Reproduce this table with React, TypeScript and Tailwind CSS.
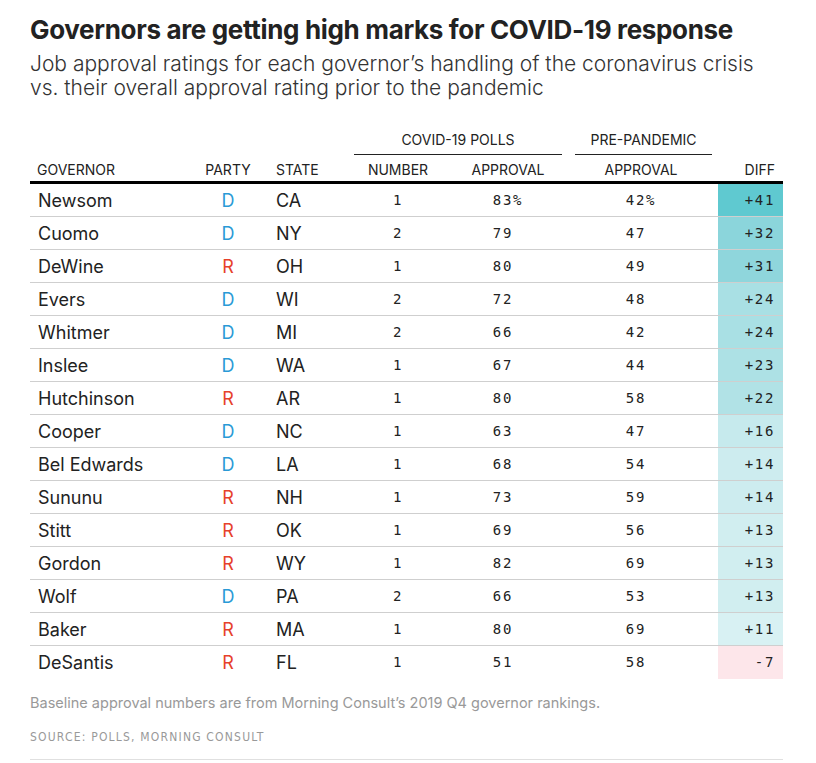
const rows = [
  { name: "Newsom", party: "D", state: "CA", num: 1, covid: "83", pre: "42", diff: "+41", bg: "bg-[#5fc9d0]", pct: true },
  { name: "Cuomo", party: "D", state: "NY", num: 2, covid: "79", pre: "47", diff: "+32", bg: "bg-[#8bd5db]" },
  { name: "DeWine", party: "R", state: "OH", num: 1, covid: "80", pre: "49", diff: "+31", bg: "bg-[#8fd6dc]" },
  { name: "Evers", party: "D", state: "WI", num: 2, covid: "72", pre: "48", diff: "+24", bg: "bg-[#a9e0e4]" },
  { name: "Whitmer", party: "D", state: "MI", num: 2, covid: "66", pre: "42", diff: "+24", bg: "bg-[#a9e0e4]" },
  { name: "Inslee", party: "D", state: "WA", num: 1, covid: "67", pre: "44", diff: "+23", bg: "bg-[#ade1e5]" },
  { name: "Hutchinson", party: "R", state: "AR", num: 1, covid: "80", pre: "58", diff: "+22", bg: "bg-[#b1e2e6]" },
  { name: "Cooper", party: "D", state: "NC", num: 1, covid: "63", pre: "47", diff: "+16", bg: "bg-[#c6eaed]" },
  { name: "Bel Edwards", party: "D", state: "LA", num: 1, covid: "68", pre: "54", diff: "+14", bg: "bg-[#cdecef]" },
  { name: "Sununu", party: "R", state: "NH", num: 1, covid: "73", pre: "59", diff: "+14", bg: "bg-[#cdecef]" },
  { name: "Stitt", party: "R", state: "OK", num: 1, covid: "69", pre: "56", diff: "+13", bg: "bg-[#d1eef0]" },
  { name: "Gordon", party: "R", state: "WY", num: 1, covid: "82", pre: "69", diff: "+13", bg: "bg-[#d1eef0]" },
  { name: "Wolf", party: "D", state: "PA", num: 2, covid: "66", pre: "53", diff: "+13", bg: "bg-[#d1eef0]" },
  { name: "Baker", party: "R", state: "MA", num: 1, covid: "80", pre: "69", diff: "+11", bg: "bg-[#d8f1f3]" },
  { name: "DeSantis", party: "R", state: "FL", num: 1, covid: "51", pre: "58", diff: "-7", bg: "bg-[#fde6ea]" },
];

const cols = "grid grid-cols-[160px_76px_88px_88px_120px_13px_137px_6px_65px]";
const mono = "font-['DejaVu_Sans_Mono',monospace] text-[14px] tracking-[0.12em]";

export default function App() {
  return (
    <div className="w-[816px] min-h-[763px] bg-white text-[#222] font-['Inter','Roboto',sans-serif]">
      <div className="px-[30px] pt-[14px]">
        <h1 className="text-[26px] font-bold leading-[32px] text-[#222] tracking-[-0.013em]">
          Governors are getting high marks for COVID-19 response
        </h1>
        <p className="mt-[6px] text-[21px] leading-[24px] text-[#333] font-light">
          Job approval ratings for each governor’s handling of the coronavirus crisis vs. their overall approval rating prior to the pandemic
        </p>

        <div className="mt-[30px] w-[753px]">
          <div className={`${cols} text-[14px] leading-[20px] text-[#222]`}>
            <div className="col-span-3" />
            <div className="col-span-2 pb-[4px] text-center border-b border-[#222]">COVID-19 POLLS</div>
            <div />
            <div className="pb-[4px] text-center border-b border-[#222]">PRE-PANDEMIC</div>
            <div className="col-span-2" />
          </div>
          <div className={`${cols} mt-[5px] text-[14px] leading-[20px] text-[#222] border-b-[3px] border-black pb-[1px]`}>
            <div className="pl-[7px]">GOVERNOR</div>
            <div className="text-center">PARTY</div>
            <div className="pl-[10px]">STATE</div>
            <div className="text-center">NUMBER</div>
            <div className="text-center pl-[12px]">APPROVAL</div>
            <div />
            <div className="text-center pr-[5px]">APPROVAL</div>
            <div />
            <div className="text-right pr-[8px]">DIFF</div>
          </div>
          {rows.map((r, i) => (
            <div
              key={r.name}
              className={`${cols} h-[33px] items-center ${i < rows.length - 1 ? "border-b border-[#cfcfcf]" : ""}`}
            >
              <div className="pl-[8px] text-[18px]">{r.name}</div>
              <div className={`text-center text-[18px] ${r.party === "D" ? "text-[#2a9ad6]" : "text-[#e6412b]"}`}>{r.party}</div>
              <div className="pl-[10px] text-[18px]">{r.state}</div>
              <div className={`text-center ${mono}`}>{r.num}</div>
              <div className={`text-center pl-[12px] ${mono}`}>
                {r.covid}
                <span className={r.pct ? "" : "invisible"}>%</span>
              </div>
              <div />
              <div className={`text-center pr-[5px] ${mono}`}>
                {r.pre}
                <span className={r.pct ? "" : "invisible"}>%</span>
              </div>
              <div />
              <div className={`h-full flex items-center justify-end pr-[8px] ${r.bg} ${mono}`}>{r.diff}</div>
            </div>
          ))}
        </div>

        <p className="mt-[14px] text-[14.5px] leading-[20px] text-[#999]">
          Baseline approval numbers are from Morning Consult’s 2019 Q4 governor rankings.
        </p>
        <p className="mt-[16px] text-[12px] leading-[16px] text-[#999] tracking-[0.1em] font-['DejaVu_Sans_Condensed','Roboto',sans-serif]">
          SOURCE: POLLS, MORNING CONSULT
        </p>
        <div className="mt-[14px] w-[753px] border-b border-[#e0e0e0]" />
      </div>
    </div>
  );
}
